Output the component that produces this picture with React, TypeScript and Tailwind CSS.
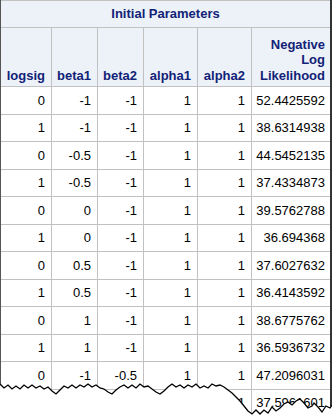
import React from "react";

const rows: string[][] = [
  ["0", "-1", "-1", "1", "1", "52.4425592"],
  ["1", "-1", "-1", "1", "1", "38.6314938"],
  ["0", "-0.5", "-1", "1", "1", "44.5452135"],
  ["1", "-0.5", "-1", "1", "1", "37.4334873"],
  ["0", "0", "-1", "1", "1", "39.5762788"],
  ["1", "0", "-1", "1", "1", "36.694368"],
  ["0", "0.5", "-1", "1", "1", "37.6027632"],
  ["1", "0.5", "-1", "1", "1", "36.4143592"],
  ["0", "1", "-1", "1", "1", "38.6775762"],
  ["1", "1", "-1", "1", "1", "36.5936732"],
  ["0", "-1", "-0.5", "1", "1", "47.2096031"],
  ["1", "-1", "-0.5", "1", "1", "37.5961601"],
];

const heads = ["logsig", "beta1", "beta2", "alpha1", "alpha2"];

// torn edge along the bottom
const jag =
  "0,384 4,388 8,385 12,389 16,386 20,389 24,385 28,388 32,385 36,388 40,386 44,389 48,387 52,391 56,394 60,390 64,386 68,388 72,385 76,388 80,385 84,387 88,384 92,387 96,385 100,388 104,389 108,392 112,394 116,390 120,387 124,385 128,388 132,385 136,388 140,384 144,387 148,386 152,389 156,392 160,394 164,391 168,387 172,384 176,387 180,385 184,388 188,385 192,387 196,384 200,388 204,386 208,388 212,384 216,386 220,385 224,387 228,390 232,393 236,397 240,401 244,406 248,411 252,414 256,410 260,414 264,410 268,413 272,407 276,411 280,408 284,404 288,402 292,405 296,401 300,399 304,403 308,408 312,406 314,403 318,407 322,412 326,406 330,408 332,405";

export default function App() {
  return (
    <div className="relative w-[332px] h-[419px] overflow-hidden bg-white font-['Liberation_Sans',Arial,sans-serif] text-[13px]">
      <div className="w-[332px] border-l border-l-[#555] border-r-2 border-r-[#333]">
        <div className="h-[28px] border-t border-b border-[#c1c1c1] bg-[#edf2f9] text-[#112277] font-bold flex items-center justify-center">
          Initial Parameters
        </div>
        <div className="grid grid-cols-[51px_46px_46px_54px_54px_1fr] bg-[#edf2f9] text-[#112277] font-bold leading-[15.5px] h-[59px] border-b border-[#c1c1c1]">
          {heads.map((h) => (
            <div key={h} className="border-r border-[#c1c1c1] flex items-end justify-end pr-[6px] pb-[3px]">
              {h}
            </div>
          ))}
          <div className="flex items-end justify-end text-right pr-[5px] pb-[3px]">
            Negative
            <br />
            Log
            <br />
            Likelihood
          </div>
        </div>
        {rows.map((r, i) => (
          <div
            key={i}
            className={
              "grid grid-cols-[51px_46px_46px_54px_54px_1fr] border-b border-[#c1c1c1] text-black " +
              (i % 2 === 0 ? "h-[28px]" : "h-[27px]")
            }
          >
            {r.map((v, j) => (
              <div
                key={j}
                className={
                  j < 5
                    ? "border-r border-[#c1c1c1] flex items-center justify-end pr-[6px]"
                    : "flex items-center justify-end pr-[5px]"
                }
              >
                {v}
              </div>
            ))}
          </div>
        ))}
      </div>
      <svg className="absolute left-0 top-0" width="332" height="419" viewBox="0 0 332 419">
        <polygon points={jag + " 332,419 0,419"} fill="#fff" />
        <polyline points={jag} fill="none" stroke="#000" strokeWidth="1.3" strokeLinejoin="miter" />
      </svg>
    </div>
  );
}
